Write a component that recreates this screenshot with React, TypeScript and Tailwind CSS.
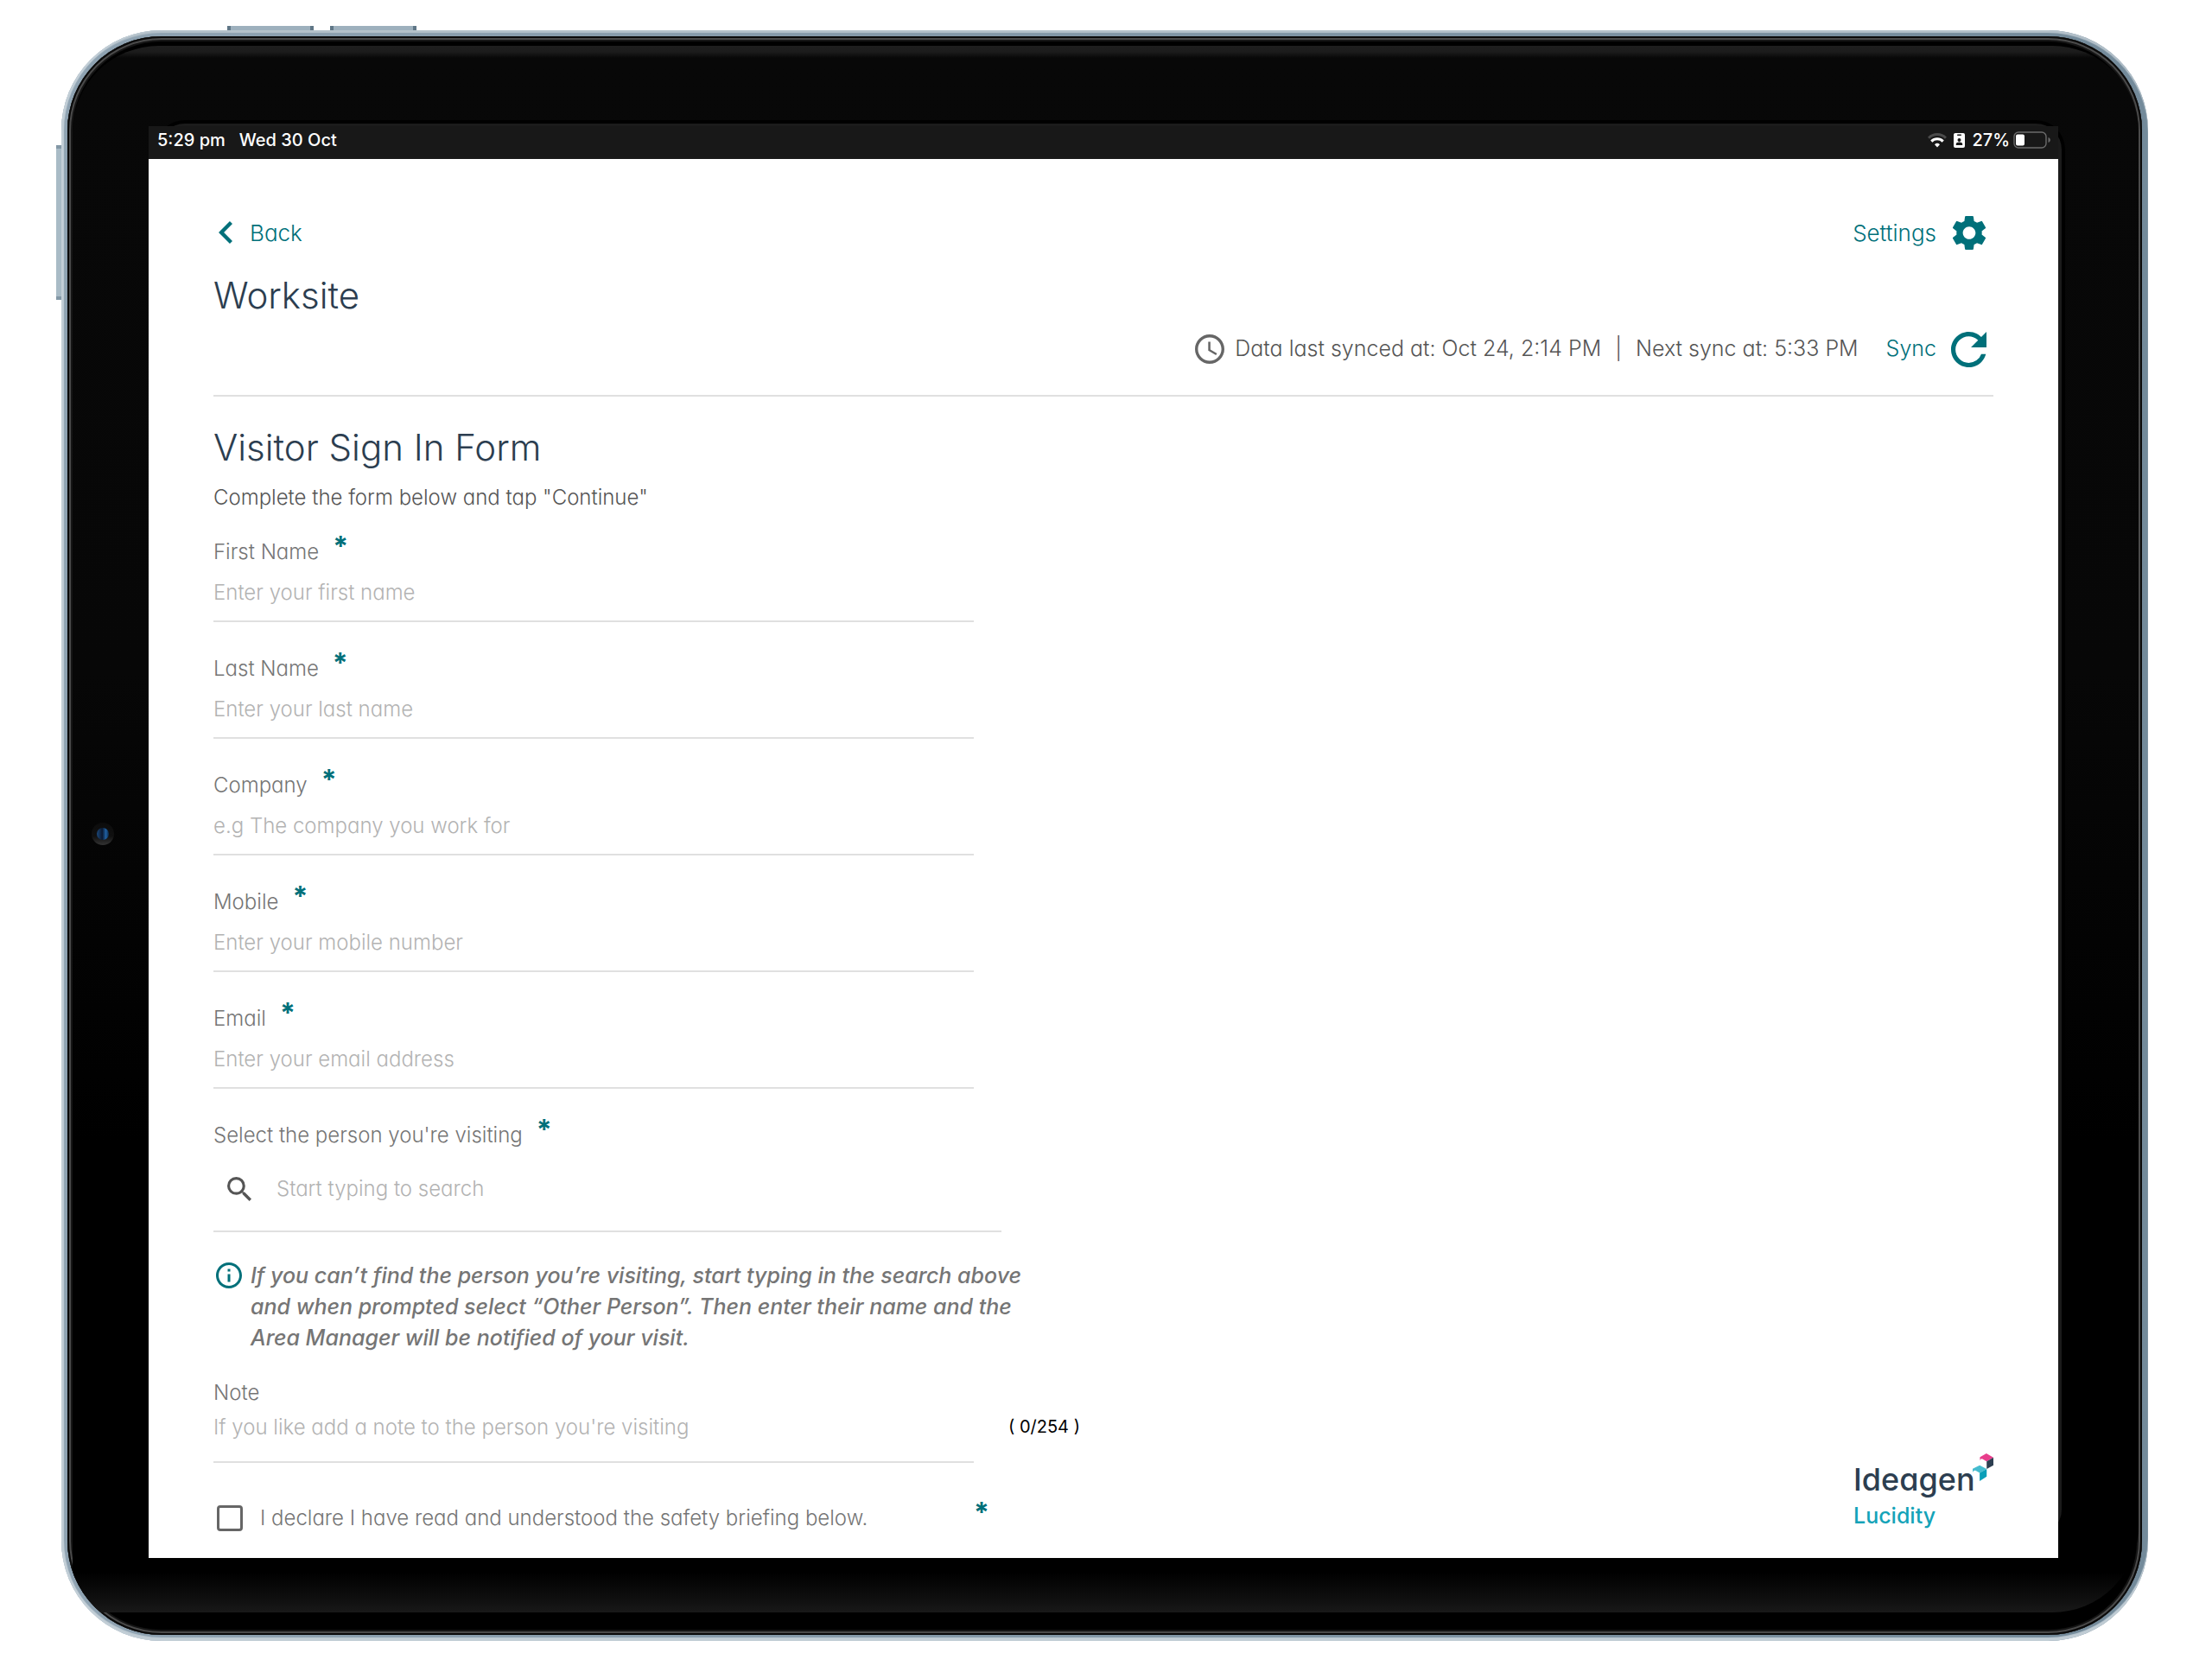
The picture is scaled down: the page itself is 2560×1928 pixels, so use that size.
import React, { useState } from 'react';

const NOTE_LIMIT = 254;

const fields = [
  { id: 'firstName', label: 'First Name', type: 'text', placeholder: 'Enter your first name' },
  { id: 'lastName', label: 'Last Name', type: 'text', placeholder: 'Enter your last name' },
  { id: 'company', label: 'Company', type: 'text', placeholder: 'e.g The company you work for' },
  { id: 'mobile', label: 'Mobile', type: 'tel', placeholder: 'Enter your mobile number' },
  { id: 'email', label: 'Email', type: 'email', placeholder: 'Enter your email address' },
];

interface IconProps {
  viewBox: string;
  className: string;
  d: string;
}

const Icon: React.FC<IconProps> = ({ viewBox, className, d }) => (
  <svg viewBox={viewBox} className={className} fill="currentColor" aria-hidden="true">
    <path d={d} />
  </svg>
);

const Required: React.FC = () => (
  <span className="h-9 text-[32px] leading-6 font-bold text-[#00707a]">*</span>
);

const StatusBar: React.FC = () => (
  <div className="flex h-[38px] items-center justify-between bg-[#181818] pr-2 pb-[6px] pl-[10px] text-[20px] leading-6 font-medium text-white">
    <div className="flex gap-4">
      <span>5:29 pm</span>
      <span>Wed 30 Oct</span>
    </div>
    <div className="flex items-center">
      <svg viewBox="0 0 22 17" className="mr-2 h-[17px] w-[22px]" fill="none" strokeWidth="3" aria-hidden="true">
        <path d="M1 5.800a14 14 0 0 1 20 0" stroke="#4a4a4a" />
        <path d="M4.300 9.600a9.400 9.400 0 0 1 13.400 0" stroke="#fff" />
        <path d="M8 13.200a4.300 4.300 0 0 1 6 0L11 16.400z" fill="#fff" />
      </svg>
      <svg viewBox="0 0 13 17" className="mr-2 h-[17px] w-[13px]" aria-hidden="true">
        <rect width="13" height="17" rx="2" fill="#fff" />
        <rect x="4" y="1.6" width="5" height="1.4" rx="0.7" fill="#181818" />
        <circle cx="6.5" cy="8" r="2" fill="#181818" />
        <path d="M2.8 14v-1.2c0-1.6 1.6-2.4 3.7-2.4s3.7.8 3.7 2.4V14z" fill="#181818" />
      </svg>
      <span>27%</span>
      <svg viewBox="0 0 44 20" className="ml-1 h-5 w-11" aria-hidden="true">
        <rect x="1" y="1" width="37" height="18" rx="5" fill="none" stroke="#6b6b6b" strokeWidth="1.4" />
        <rect x="3" y="3.5" width="10" height="13" rx="2" fill="#fff" />
        <path d="M40.5 7v6c1.6-.5 2.3-1.6 2.3-3s-.7-2.5-2.3-3z" fill="#6b6b6b" />
      </svg>
    </div>
  </div>
);

const Header: React.FC = () => (
  <header className="border-b-2 border-[#e0e0e0] pt-[55px] pb-[31px]">
    <div className="flex h-[60px] items-center justify-between text-[26px] text-[#00707a]">
      <button type="button" className="flex items-center gap-5 pl-[6px]">
        <Icon viewBox="8 6 7.41 12" className="h-[26px] w-4" d="M15.41 7.41 14 6l-6 6 6 6 1.41-1.41L10.83 12z" />
        Back
      </button>
      <button type="button" className="flex items-center gap-[18px] pr-2">
        Settings
        <Icon
          viewBox="2.2 2 19.6 20"
          className="h-[41px] w-10"
          d="M19.14 12.94c.04-.3.06-.61.06-.94 0-.32-.02-.64-.07-.94l2.03-1.58a.49.49 0 0 0 .12-.61l-1.92-3.32a.488.488 0 0 0-.59-.22l-2.39.96c-.5-.38-1.03-.7-1.62-.94l-.36-2.54a.484.484 0 0 0-.48-.41h-3.84c-.24 0-.43.17-.47.41l-.36 2.54c-.59.24-1.13.57-1.62.94l-2.39-.96c-.22-.08-.47 0-.59.22L2.74 8.87c-.12.21-.08.47.12.61l2.03 1.58c-.05.3-.09.63-.09.94s.02.64.07.94l-2.03 1.58a.49.49 0 0 0-.12.61l1.92 3.32c.12.22.37.29.59.22l2.39-.96c.5.38 1.03.7 1.62.94l.36 2.54c.05.24.24.41.48.41h3.84c.24 0 .44-.17.47-.41l.36-2.54c.59-.24 1.13-.56 1.62-.94l2.39.96c.22.08.47 0 .59-.22l1.92-3.32c.12-.22.07-.47-.12-.61l-2.01-1.58zM12 15.6c-1.98 0-3.6-1.62-3.6-3.6s1.62-3.6 3.6-3.6 3.6 1.62 3.6 3.6-1.62 3.6-3.6 3.6z"
        />
      </button>
    </div>
    <h1 className="mt-[15px] text-[42px] leading-[56px] text-[#2c3e50]">Worksite</h1>
    <div className="mt-3 flex h-11 items-center justify-end pr-2 text-[25px] text-[#555]">
      <Icon
        viewBox="2 2 20 20"
        className="mr-3 size-[34px] text-[#666]"
        d="M11.99 2C6.47 2 2 6.48 2 12s4.47 10 9.99 10C17.52 22 22 17.52 22 12S17.52 2 11.99 2zM12 20c-4.42 0-8-3.58-8-8s3.58-8 8-8 8 3.58 8 8-3.58 8-8 8zm.5-13H11v6l5.25 3.15.75-1.23-4.5-2.67z"
      />
      <span>Data last synced at: Oct 24, 2:14 PM</span>
      <span className="mx-4">|</span>
      <span>Next sync at: 5:33 PM</span>
      <button type="button" className="ml-8 flex items-center gap-[17px] text-[#00707a]">
        Sync
        <Icon
          viewBox="4 4 16 16"
          className="size-[41px]"
          d="M17.65 6.35A7.958 7.958 0 0 0 12 4c-4.42 0-7.99 3.58-7.99 8s3.57 8 7.99 8c3.73 0 6.84-2.55 7.73-6h-2.08A5.99 5.99 0 0 1 12 18c-3.31 0-6-2.69-6-6s2.69-6 6-6c1.66 0 3.14.69 4.22 1.78L13 11h7V4l-2.35 2.35z"
        />
      </button>
    </div>
  </header>
);

const Logo: React.FC = () => (
  <div className="mb-[31px] w-[162px]">
    <div className="flex items-start">
      <span className="text-[36px] leading-[48px] font-medium text-[#2c3e50]">Ideagen</span>
      <svg viewBox="0 0 71 94" className="-mt-[6px] -ml-[3px] h-8 w-6 shrink-0" aria-hidden="true">
        <path d="M47 0 71 14 48 27 34 19C29 17 25 20 25 26V12z" fill="#e83e8c" />
        <path d="M71 14V40L48 53V27z" fill="#2c3e50" />
        <path d="M24 40 48 53 24 66 11 59C6 57 1 59 0 66V52z" fill="#45bccf" />
        <path d="M48 53V79L24 94V66z" fill="#0a9fb8" />
      </svg>
    </div>
    <div className="text-[25px] leading-9 font-medium text-[#14a3b8]">Lucidity</div>
  </div>
);

const SignInForm: React.FC = () => {
  const [note, setNote] = useState('');

  return (
    <form className="min-w-0 text-[24px] leading-9 text-[#757575]">
      {fields.map((field) => (
        <div key={field.id} className="mb-9 w-[880px] max-w-full border-b-2 border-[#e0e0e0] pb-[14px]">
          <div className="flex gap-4">
            <label htmlFor={field.id}>{field.label}</label>
            <Required />
          </div>
          <input
            id={field.id}
            type={field.type}
            placeholder={field.placeholder}
            className="mt-[11px] block h-9 w-full outline-none placeholder:text-[#b3b3b3]"
          />
        </div>
      ))}

      <div className="w-[912px] max-w-full border-b-2 border-[#e0e0e0]">
        <div className="flex gap-4">
          <label htmlFor="person">Select the person you're visiting</label>
          <Required />
        </div>
        <div className="flex h-[92px] items-center gap-[29px] pb-1 pl-4">
          <Icon
            viewBox="3 3 17.49 17.49"
            className="size-7 text-[#555]"
            d="M15.5 14h-.79l-.28-.27A6.471 6.471 0 0 0 16 9.500 6.500 6.500 0 1 0 9.500 16c1.610 0 3.090-.59 4.230-1.570l.27.28v.79l5 4.990L20.490 19l-4.990-5zm-6 0C7.010 14 5 11.990 5 9.500S7.010 5 9.500 5 14 7.010 14 9.500 11.990 14 9.500 14z"
          />
          <input
            id="person"
            type="search"
            placeholder="Start typing to search"
            className="h-9 min-w-0 flex-1 outline-none placeholder:text-[#b3b3b3]"
          />
        </div>
      </div>

      <div className="mt-8 flex gap-[10px] pl-[3px]">
        <Icon
          viewBox="2 2 20 20"
          className="mt-[3px] size-[30px] shrink-0 text-[#00707a]"
          d="M11 7h2v2h-2zm0 4h2v6h-2zm1-9C6.480 2 2 6.480 2 12s4.480 10 10 10 10-4.480 10-10S17.520 2 12 2zm0 18c-4.410 0-8-3.590-8-8s3.590-8 8-8 8 3.590 8 8-3.590 8-8 8z"
        />
        <p className="text-[25px] font-medium italic">
          If you can’t find the person you’re visiting, start typing in the search above
          <br />
          and when prompted select “Other Person”. Then enter their name and the
          <br />
          Area Manager will be notified of your visit.
        </p>
      </div>

      <label htmlFor="note" className="mt-7 block">
        Note
      </label>
      <div className="mt-[3px] flex gap-10">
        <input
          id="note"
          type="text"
          maxLength={NOTE_LIMIT}
          value={note}
          onChange={(e) => setNote(e.target.value)}
          placeholder="If you like add a note to the person you're visiting"
          className="h-[60px] w-[880px] min-w-0 border-b-2 border-[#e0e0e0] pb-[22px] outline-none placeholder:text-[#b3b3b3]"
        />
        <span className="text-[20px] font-normal text-black">
          ( {note.length}/{NOTE_LIMIT} )
        </span>
      </div>

      <div className="mt-[46px] flex w-[898px] max-w-full items-center justify-between pb-7">
        <div className="flex items-center gap-5 pl-1">
          <input
            id="declare"
            type="checkbox"
            className="size-[30px] appearance-none rounded-[4px] border-[3px] border-[#666] checked:bg-[#00707a]"
          />
          <label htmlFor="declare">I declare I have read and understood the safety briefing below.</label>
        </div>
        <Required />
      </div>
    </form>
  );
};

const App: React.FC = () => {
  return (
    <div className="bg-white pt-[35px] pr-[74px] pb-[29px] pl-[71px] font-['Inter','Liberation_Sans',sans-serif] font-light [font-feature-settings:'cv11']">
      <div className="relative">
        {/* hardware buttons */}
        <div className="absolute -top-[5px] left-[192px] h-[6px] w-[100px] border-x-4 border-[#5f7686] bg-[#9db0bd]" />
        <div className="absolute -top-[5px] left-[311px] h-[6px] w-[100px] border-x-4 border-[#5f7686] bg-[#9db0bd]" />
        <div className="absolute top-[133px] -left-[6px] h-[179px] w-[7px] border-y-4 border-[#8398a6] bg-[#a9bbc6]" />

        <div className="relative rounded-[116px] bg-[linear-gradient(90deg,#8fa3b2,#738a9a)] p-[7px] shadow-[inset_3px_0_1px_#c3cfd7,inset_0_3px_1px_#b4c1ca,inset_0_-4px_1px_#c0ccd4]">
          <div className="relative overflow-hidden rounded-[109px] bg-black pt-[104px] pr-[97px] pb-[89px] pl-[94px] shadow-[inset_0_0_0_2px_#0a0a0a,inset_0_0_0_4px_#4a4a4a,inset_0_0_0_6px_#151515]">
            {/* glass reflection */}
            <div className="absolute top-[11px] right-1 bottom-[26px] left-[6px] rounded-[100px] rounded-bl-none bg-[linear-gradient(180deg,#1e1e1e_0,#1c1c1c_7px,#080808_14px,#070707_40%,#000_70%,#000_calc(100%-46px),#101010_calc(100%-14px),#191919_100%)]" />
            {/* camera */}
            <div className="absolute top-[910px] left-[28px] size-[26px] rounded-full bg-[linear-gradient(180deg,#0c0c0c,#101010_60%,#333)] p-[6px]">
              <div className="size-[14px] rounded-full bg-[linear-gradient(90deg,#1c4a7c,#0a1830_45%,#1f5fa0_75%,#0b2a4c)]" />
            </div>

            <div className="relative">
              <div className="absolute -top-[3px] -right-1 bottom-[26px] left-3 rounded-[30px] bg-[#1b1b1b] shadow-[0_0_0_4px_#000]" />
              <div className="relative">
                <StatusBar />
                <main className="bg-white px-[75px]">
                  <Header />
                  <h2 className="pt-[31px] text-[42px] leading-[56px] text-[#2c3e50]">Visitor Sign In Form</h2>
                  <p className="mt-3 text-[24px] leading-9 text-[#555]">Complete the form below and tap "Continue"</p>
                  <div className="mt-[27px] flex items-end justify-between">
                    <SignInForm />
                    <Logo />
                  </div>
                </main>
              </div>
            </div>
          </div>
        </div>
      </div>
    </div>
  );
};

export default App;
